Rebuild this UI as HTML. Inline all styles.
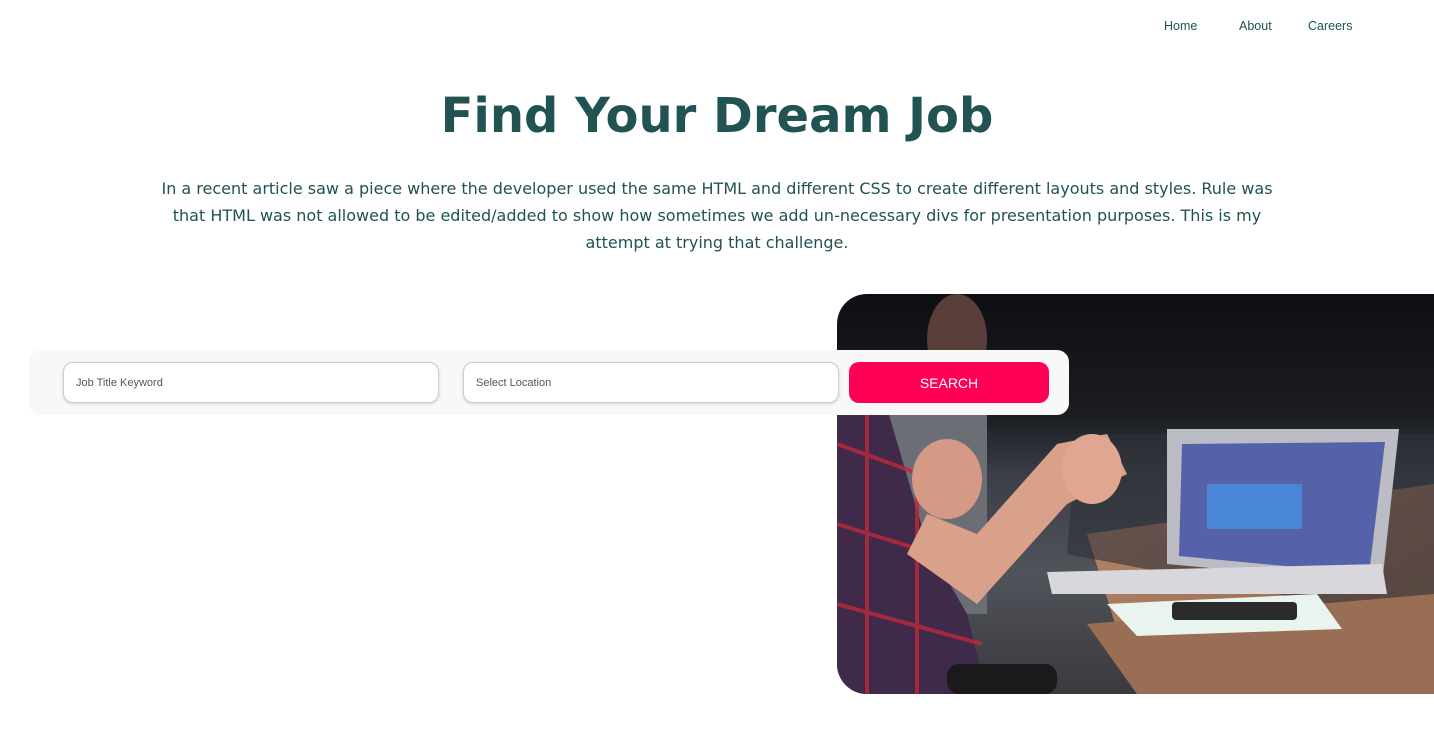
<!DOCTYPE html>
<html><head><meta charset="utf-8"><style>
*{margin:0;padding:0;box-sizing:border-box}
body{width:1434px;height:729px;background:#fff;position:relative;overflow:hidden;font-family:"DejaVu Sans","Liberation Sans",sans-serif;color:#215352}
nav a{position:absolute;top:19px;font-size:12.5px;color:#215352;text-decoration:none;font-family:"Liberation Sans",sans-serif}
h1{position:absolute;top:88px;left:0;width:1434px;text-align:center;font-size:48px;font-weight:bold}
p{position:absolute;top:175px;left:152px;width:1130px;text-align:center;font-size:16px;line-height:27px}
.img{position:absolute;left:837px;top:294px;width:597px;height:400px;border-radius:30px 0 0 30px;overflow:hidden}
.bar{position:absolute;left:29px;top:350px;width:1040px;height:65px;background:#f8f8f8;border-radius:12px}
.in{position:absolute;top:362px;height:41px;width:376px;background:#fff;border:1px solid #ccc;border-radius:10px;box-shadow:0 1px 3px rgba(0,0,0,.15);font-family:"Liberation Sans",sans-serif;font-size:11px;color:#555;padding:14px 12px}
.btn{position:absolute;left:849px;top:362px;width:200px;height:41px;background:#ff0055;border-radius:10px;color:#fff;font-family:"Liberation Sans",sans-serif;font-size:14px;text-align:center;line-height:42px}
</style></head><body>
<nav><a style="left:1164px">Home</a><a style="left:1239px">About</a><a style="left:1308px">Careers</a></nav>
<h1>Find Your Dream Job</h1>
<p>In a recent article saw a piece where the developer used the same HTML and different CSS to create different layouts and styles. Rule was that HTML was not allowed to be edited/added to show how sometimes we add un-necessary divs for presentation purposes. This is my attempt at trying that challenge.</p>
<div class="img"><svg width="597" height="400" viewBox="0 0 597 400">
<defs><linearGradient id="bg" x1="0" y1="0" x2="0" y2="1"><stop offset="0" stop-color="#0d0f14"/><stop offset=".3" stop-color="#1a1c22"/><stop offset=".45" stop-color="#3b3e46"/><stop offset=".7" stop-color="#50535a"/><stop offset="1" stop-color="#3a3a3e"/></linearGradient>
<linearGradient id="desk" x1="0" y1="0" x2="1" y2="1"><stop offset="0" stop-color="#b8896a"/><stop offset="1" stop-color="#8a6048"/></linearGradient></defs>
<rect width="597" height="400" fill="url(#bg)"/>
<ellipse cx="120" cy="45" rx="30" ry="45" fill="#5a3e3a"/>
<rect x="30" y="120" width="120" height="200" fill="#6b6e75"/>
<polygon points="250,240 597,190 597,400 300,400" fill="url(#desk)"/>
<polygon points="240,140 597,140 597,330 230,260" fill="#2e3038" opacity=".6"/>
<polygon points="250,330 597,300 597,400 300,400" fill="#9a6e55"/>
<polygon points="330,135 562,135 545,290 330,270" fill="#bcbcc4"/>
<polygon points="345,150 548,148 532,280 342,262" fill="#5561a8"/>
<rect x="370" y="190" width="95" height="45" fill="#4a86d6"/>
<polygon points="210,278 545,270 550,300 215,300" fill="#d8d8dc"/>
<polygon points="270,310 480,300 505,335 300,342" fill="#e9f4ee"/>
<rect x="335" y="308" width="125" height="18" rx="4" fill="#2a2a2c"/>
<polygon points="0,80 40,80 90,250 130,320 150,400 0,400" fill="#3f2a4a"/>
<g stroke="#c0283a" stroke-width="4" opacity=".8"><line x1="0" y1="150" x2="110" y2="190"/><line x1="0" y1="230" x2="130" y2="270"/><line x1="0" y1="310" x2="145" y2="350"/><line x1="30" y1="100" x2="30" y2="400"/><line x1="80" y1="200" x2="80" y2="400"/></g>
<polygon points="70,260 140,310 230,210 290,180 270,140 220,150 140,240 90,220" fill="#d9a08a"/>
<ellipse cx="110" cy="185" rx="35" ry="40" fill="#d49a86"/>
<ellipse cx="255" cy="175" rx="30" ry="35" fill="#e0a690"/>
<rect x="110" y="370" width="110" height="30" rx="12" fill="#1a1a1c"/>
</svg></div>
<div class="bar"></div>
<div class="in" style="left:63px">Job Title Keyword</div>
<div class="in" style="left:463px">Select Location</div>
<div class="btn">SEARCH</div>
</body></html>
